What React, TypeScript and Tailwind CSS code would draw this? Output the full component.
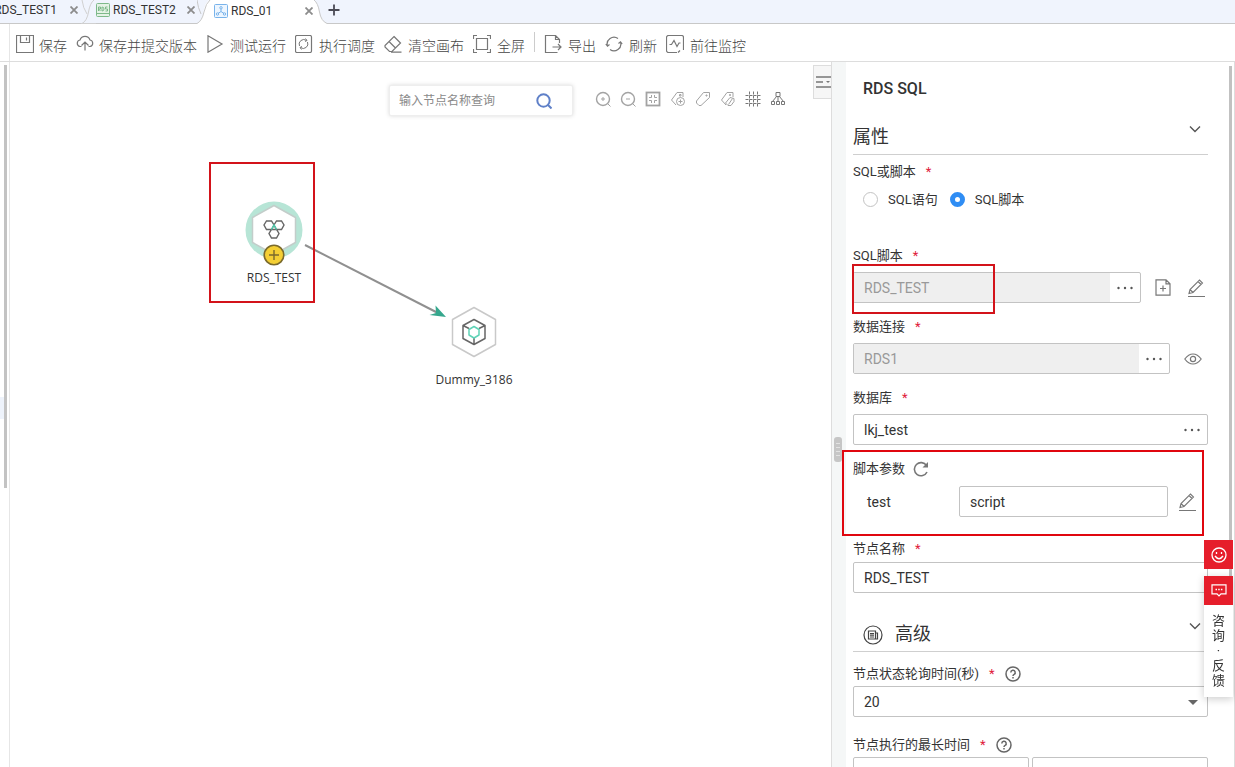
import { useState, type ReactNode } from 'react';

const ICONS: Record<string, ReactNode> = {
  save: <path d="M.5.5h17v17H.5zM4.5.5v7h9v-7M10.5 2.5v3" />,
  upload: <path d="M5.500 11.500H4A3.300 3.300 0 0 1 4 5 5.300 5.300 0 0 1 14 5a3.300 3.300 0 0 1 0 6.500h-1.500M9 15.500V7M5.500 10.500 9 7l3.500 3.500" />,
  play: <path d="M2 .8v16.400L16 9z" />,
  schedule: (
    <>
      <rect x=".5" y=".5" width="16" height="17" rx="1.500" />
      <path d="M4.500 11a4.600 4.600 0 0 1 7-5.500M12.500 7a4.600 4.600 0 0 1-7 5.500M10.500 3.500l1.500 2-2 1M6.500 14.500l-1.500-2 2-1" strokeWidth="1" />
    </>
  ),
  eraser: <path d="M10 1.500 16.500 8 8 16.500H5.500L1 12v-1.500zM5 6.500l6.500 6.500M7 17.200h10.500" />,
  fullscreen: <path d="M3.500 3.500h11v11h-11zM.5 4V.5H4M14 .5h3.500V4M17.500 14v3.500H14M4 17.500H.5V14" />,
  export: <path d="M13.500 17.500H1.500V.500h10l4 4V8M11.500.5v4h4M8.500 12h8.500M14 9l3 3-3 3" />,
  refresh: <path d="M2.500 11A6.800 6.800 0 0 1 13 3.500M15.500 7A6.800 6.800 0 0 1 5 14.500M.8 9l1.700 2.200L4.500 9.500M13.500 8.500l2-1.700L17.200 9" />,
  monitor: <path d="M11 17.500H2.500a2 2 0 0 1-2-2v-13a2 2 0 0 1 2-2h13a2 2 0 0 1 2 2V15M3.500 9.500h2l2.500-4 3 6 2-3.500h1.500M12 17.500l2-2" />,
};

const CANVAS_TOOLS: { label: string; dark?: boolean; art: ReactNode }[] = [
  {
    label: '放大',
    art: (
      <>
        <circle cx="8" cy="8" r="6.500" strokeWidth="1.400" />
        <path d="M12.500 12.500l3 3M8 6v4M6 8h4" />
      </>
    ),
  },
  {
    label: '缩小',
    art: (
      <>
        <circle cx="8" cy="8" r="6.500" strokeWidth="1.400" />
        <path d="M12.500 12.500l3 3M6 8h4" />
      </>
    ),
  },
  {
    label: '适应画布',
    art: (
      <>
        <rect x="1.500" y="1.500" width="13" height="13" strokeWidth="1.800" />
        <path d="M6.500 4v2.500H4M9.500 4v2.500H12M6.500 12V9.500H4M9.500 12V9.500H12" />
      </>
    ),
  },
  {
    label: '添加标签',
    art: (
      <>
        <path d="M6 14 1.500 9 7 1.500h6V6M9.500 3.500h1.500v1.500H9.500z" />
        <circle cx="10.500" cy="10.500" r="4" />
        <path d="M10.500 8.500v4M8.500 10.500h4" />
      </>
    ),
  },
  { label: '标签', art: <path d="M8.500 1.500h6v5L6 14.500H4L1.500 12v-2zM11 4h1v1h-1z" /> },
  {
    label: '复制标签',
    art: <path d="M6 14 1.500 9 7 1.500h6V6M9.500 3.500h1v1h-1zM10 6.500 5.500 12 8 14.500h3l3-4V7.500zM8.500 13.500l4-6" />,
  },
  {
    label: '网格',
    dark: true,
    art: <path d="M4.500.5v15M8.500.5v15M12.500.5v15M.5 4.500h15M.5 8.500h15M.5 12.500h15" strokeDasharray="3 1" />,
  },
  {
    label: '自动布局',
    dark: true,
    art: <path d="M6 1.500h4v4H6zM1.500 10.500h3v3h-3zM6.500 10.500h3v3h-3zM11.500 10.500h3v3h-3zM6.500 5.500l-4 5M8 5.500v5M9.500 5.500l4 5" />,
  },
];

function ToolButton({ icon, label, tight }: { icon: string; label: string; tight?: boolean }) {
  return (
    <button className={`flex items-center text-sm leading-5 font-light text-[#444] ${tight ? 'gap-[5px]' : 'gap-1.5'}`}>
      <svg className="-mt-1 size-[18px]" viewBox="0 0 18 18" fill="none" stroke="#777" strokeWidth="1.2">
        {ICONS[icon]}
      </svg>
      <span>{label}</span>
    </button>
  );
}

function CloseButton() {
  return (
    <button aria-label="关闭">
      <svg className="size-2" viewBox="0 0 8 8" stroke="#8c8c8c" strokeWidth="1.8">
        <path d="M.5.500l7 7M7.500.500l-7 7" />
      </svg>
    </button>
  );
}

function Label({ htmlFor, help, children }: { htmlFor?: string; help?: boolean; children: ReactNode }) {
  return (
    <div className="flex h-5 items-center gap-2.5 pt-px">
      <label htmlFor={htmlFor}>{children}</label>
      <span className="text-[#e0203a]">*</span>
      {help && (
        <svg className="size-4" viewBox="0 0 16 16" fill="none" stroke="#666" strokeWidth="1.5">
          <circle cx="8" cy="8" r="7" />
          <path d="M5.800 6.500a2.200 2.200 0 1 1 3.300 1.900Q8 9 8 10M8 11v1.500" />
        </svg>
      )}
    </div>
  );
}

function PickerField({ id, value, disabled }: { id: string; value: string; disabled?: boolean }) {
  return (
    <div className="flex h-[31px] min-w-0 flex-1 overflow-hidden rounded-[2px] border border-[#c3c3c3] bg-white">
      <input
        id={id}
        defaultValue={value}
        disabled={disabled}
        className="min-w-0 flex-1 px-2.5 text-sm disabled:bg-[#efefef] disabled:text-[#999]"
      />
      <button aria-label="选择" className="flex w-[30px] items-center justify-center">
        <svg className="h-1 w-4" viewBox="0 0 16 4" fill="#555">
          <circle cx="1.500" cy="2" r="1.200" />
          <circle cx="8" cy="2" r="1.200" />
          <circle cx="14.500" cy="2" r="1.200" />
        </svg>
      </button>
    </div>
  );
}

function EditIcon() {
  return (
    <svg className="size-[18px]" viewBox="0 0 18 18" fill="none" stroke="#777" strokeWidth="1.100">
      <path d="M1 17.500h17M2 14.500l1-4L12.500 1l3 3L6 13.500zM3 10.500l3 3M11 2.500l3 3" />
    </svg>
  );
}

function SectionHead({ title, icon }: { title: string; icon?: ReactNode }) {
  return (
    <div className="flex h-[37px] items-center border-b border-[#cfcfcf]">
      {icon}
      <h3 className="flex-1 pt-px text-lg">{title}</h3>
      <button aria-label="收起" className="mt-[5px] mr-[7px] self-start">
        <svg className="size-3" viewBox="0 0 12 12" fill="none" stroke="#555" strokeWidth="1.400">
          <path d="M1 3.500l5 5 5-5" />
        </svg>
      </button>
    </div>
  );
}

function GraphCanvas() {
  return (
    <main className="relative min-w-0 flex-1 overflow-hidden">
      <div className="flex items-start justify-end pt-[3px]">
        <div className="mt-5 flex h-[31px] w-[184px] items-center rounded-[2px] border border-[#eee] bg-white pr-5 pl-[9px] shadow-[0_0_4px_rgba(0,0,0,0.15)]">
          <input
            aria-label="输入节点名称查询"
            placeholder="输入节点名称查询"
            className="min-w-0 flex-1 text-xs placeholder:text-[#8a8a8a]"
          />
          <button aria-label="查询">
            <svg className="size-4" viewBox="0 0 16 16" fill="none" stroke="#5f80c8" strokeWidth="2">
              <circle cx="7.500" cy="7.500" r="6.200" />
              <path d="M12 12l3.500 3.500" />
            </svg>
          </button>
        </div>
        <div className="mt-[26px] ml-[22px] flex gap-[9px]">
          {CANVAS_TOOLS.map((tool) => (
            <button key={tool.label} aria-label={tool.label}>
              <svg className="size-4" viewBox="0 0 16 16" fill="none" stroke={tool.dark ? '#777' : '#a3a3a3'}>
                {tool.art}
              </svg>
            </button>
          ))}
        </div>
        <button
          aria-label="收起面板"
          className="ml-[27px] flex h-[34px] w-[18px] items-center justify-end border border-r-0 border-[#ddd] bg-[#f6f6f6]"
        >
          <svg className="h-3 w-[15px]" viewBox="0 0 15 12" stroke="#777" strokeWidth="1.600">
            <path d="M0 1h15M0 6h7M0 11h15" />
            <path d="M10 5h4l-2 2z" fill="#777" stroke="none" />
          </svg>
        </button>
      </div>

      {/* edge between nodes */}
      <svg className="pointer-events-none absolute top-0 left-0 h-[330px] w-[520px]" viewBox="0 0 520 330">
        <path d="M295 183 428 251" stroke="#909090" strokeWidth="2" />
        <path d="M436 255 425.500 243.500 426 251 419.500 253z" fill="#35a78d" />
      </svg>

      <div className="absolute top-[138px] left-[224px] flex w-20 flex-col items-center">
        <svg className="h-[68px] w-20" viewBox="0 0 80 68" fill="none">
          <circle cx="40" cy="30" r="28.500" fill="#b7e5d6" />
          <path d="M40 5.500 61.500 17.500v25L40 54.500 18.500 42.500v-25z" fill="#fff" stroke="#c3cdca" strokeWidth="1.500" strokeLinejoin="round" />
          <path d="M32.500 21h5l2.500 4-2.500 4.500h-5L30 25zM42.500 21h5l2.500 4-2.500 4.500h-5L40 25zM37.500 29.500h5l2.500 4-2.500 4.500h-5L35 33.500z" stroke="#666" strokeWidth="1.400" />
          <path d="M37.500 29.500 40 25l2.500 4.500" stroke="#4fceae" strokeWidth="1.400" />
          <circle cx="40" cy="55" r="9.800" fill="#f4cf34" stroke="#7a6a2c" strokeWidth="1.600" />
          <path d="M40 50v10M35 55h10" stroke="#7a6a2c" strokeWidth="1.400" />
        </svg>
        <span className="font-['Open_Sans','Noto_Sans',sans-serif] text-xs leading-5 text-[#333]">RDS_TEST</span>
      </div>

      <div className="absolute top-[240px] left-[424px] flex w-20 flex-col items-center">
        <svg className="h-[68px] w-20" viewBox="0 0 80 68" fill="none" strokeLinejoin="round">
          <path d="M40 5.500 61.500 17.500v25L40 54.500 18.500 42.500v-25z" fill="#fff" stroke="#c9c9c9" strokeWidth="1.500" />
          <path d="M40 17.500 51 23.500v13L40 42.500 29 36.500v-13zM29 23.500l6 3M51 23.500l-6 3M40 35v7" stroke="#666" strokeWidth="1.500" />
          <path d="M40 24.500 45 27.500v5.500l-5 3-5-3v-5.500z" stroke="#5fd3b7" strokeWidth="1.500" />
        </svg>
        <span className="font-['Open_Sans','Noto_Sans',sans-serif] text-xs leading-5 text-[#333]">Dummy_3186</span>
      </div>

      <div className="pointer-events-none absolute top-[100px] left-[199px] h-[141px] w-[106px] border-2 border-[#d3131a]" />
    </main>
  );
}

function PropertyPanel() {
  const [mode, setMode] = useState('script');
  const radioClass =
    'size-[15px] appearance-none rounded-full border border-[#c3c3c3] bg-white checked:border-5 checked:border-[#2f8df4]';

  return (
    <aside className="flex w-[404px] shrink-0 overflow-hidden border-x border-[#ddd] text-[13px] text-[#333]">
      <div className="w-3.5 shrink-0 bg-[#f5f7f7] pt-[375px] pl-0.5">
        <div className="flex h-[25px] w-2 items-center justify-center rounded-[3px] bg-[#c6c6c6]">
          <svg className="h-4 w-1" viewBox="0 0 4 16" stroke="#fff">
            <path d="M1 1v14M3 1v14" strokeDasharray="1 3" />
          </svg>
        </div>
      </div>

      <div className="min-w-0 flex-1 pr-[21px] pl-[7px]">
        <h2 className="mb-1 flex h-[52px] items-center pt-px pl-2.5 text-base font-medium">RDS SQL</h2>
        <SectionHead title="属性" />

        <div role="radiogroup" aria-label="SQL或脚本" className="mt-1.5 mb-[35px]">
          <Label>SQL或脚本</Label>
          <div className="mt-[7px] flex h-[22px] items-center gap-3 pt-px pl-2.5">
            <label className="flex items-center gap-2.5">
              <input type="radio" name="mode" className={radioClass} checked={mode === 'sql'} onChange={() => setMode('sql')} />
              SQL语句
            </label>
            <label className="flex items-center gap-2.5">
              <input type="radio" name="mode" className={radioClass} checked={mode === 'script'} onChange={() => setMode('script')} />
              SQL脚本
            </label>
          </div>
        </div>

        <div className="space-y-[13px]">
          <div className="space-y-[7px]">
            <Label htmlFor="script">SQL脚本</Label>
            <div className="relative flex items-center">
              <PickerField id="script" value="RDS_TEST" disabled />
              <button aria-label="新建脚本" className="ml-3.5">
                <svg className="h-[17px] w-4" viewBox="0 0 16 17" fill="none" stroke="#777" strokeWidth="1.200">
                  <path d="M1 .8h10l4 4v11.400H1zM11 .8v4h4M8 6.500v6M5 9.500h6" />
                </svg>
              </button>
              <button aria-label="编辑脚本" className="mr-[3px] ml-4">
                <EditIcon />
              </button>
              <div className="pointer-events-none absolute -top-2 -left-px h-[50px] w-[143px] border-2 border-[#d3131a]" />
            </div>
          </div>

          <div className="space-y-[7px]">
            <Label htmlFor="conn">数据连接</Label>
            <div className="flex items-center">
              <PickerField id="conn" value="RDS1" disabled />
              <button aria-label="查看" className="mr-1.5 ml-3.5">
                <svg className="h-3 w-[18px]" viewBox="0 0 18 12" fill="none" stroke="#777" strokeWidth="1.200">
                  <path d="M.8 6Q4.500 1 9 1t8.200 5Q13.500 11 9 11T.8 6z" />
                  <circle cx="9" cy="6" r="2.600" />
                </svg>
              </button>
            </div>
          </div>

          <div className="space-y-[7px]">
            <Label htmlFor="db">数据库</Label>
            <div className="flex">
              <PickerField id="db" value="lkj_test" />
            </div>
          </div>

          <div className="relative">
            <div className="flex h-5 items-center gap-2 pt-px">
              <label htmlFor="param">脚本参数</label>
              <button aria-label="刷新参数">
                <svg className="size-4" viewBox="0 0 16 16" fill="none" stroke="#777" strokeWidth="1.600">
                  <path d="M14 11A6.600 6.600 0 1 1 13.500 4.500" />
                  <path d="M15 1v5.500H9.500z" fill="#777" stroke="none" />
                </svg>
              </button>
            </div>
            <div className="mt-2 flex items-center pl-3.5">
              <label htmlFor="param" className="w-[92px] text-sm">test</label>
              <input
                id="param"
                defaultValue="script"
                className="h-[31px] min-w-0 flex-1 rounded-[2px] border border-[#c3c3c3] px-2.5 text-sm"
              />
              <button aria-label="编辑参数" className="mr-3 ml-2.5">
                <EditIcon />
              </button>
            </div>
            <div className="pointer-events-none absolute -top-2 right-1 -left-[11px] h-[86px] border-2 border-[#e0070f]" />
          </div>
        </div>

        <div className="mt-[21px] space-y-1">
          <Label htmlFor="node">节点名称</Label>
          <input
            id="node"
            defaultValue="RDS_TEST"
            className="block h-[31px] w-full rounded-[2px] border border-[#c3c3c3] px-2.5 text-sm"
          />
        </div>

        <div className="mt-[22px]">
          <SectionHead
            title="高级"
            icon={
              <svg className="mt-1 mr-3 ml-2.5 size-5" viewBox="0 0 20 20" fill="none" stroke="#444" strokeWidth="1.200">
                <circle cx="10" cy="10" r="9" />
                <path d="M5.500 6h7v8h-7zM12.500 8h2v6h-2M7 8.500h4M7 10.200h4M7 12h4" />
              </svg>
            }
          />
        </div>

        <div className="mt-[11px] space-y-[3px]">
          <Label htmlFor="poll" help>节点状态轮询时间(秒)</Label>
          <div className="relative">
            <select
              id="poll"
              className="block h-[31px] w-full appearance-none rounded-[2px] border border-[#c3c3c3] px-2.5 text-sm"
            >
              <option>20</option>
            </select>
            <svg className="pointer-events-none absolute top-3.5 right-2.5 h-[5px] w-2.5" viewBox="0 0 10 5">
              <path d="M0 0h10L5 5z" fill="#666" />
            </svg>
          </div>
        </div>

        <div className="mt-[17px] space-y-[3px]">
          <Label htmlFor="max" help>节点执行的最长时间</Label>
          <div className="flex gap-[3px]">
            <input id="max" className="h-[31px] min-w-0 flex-1 rounded-[2px] border border-[#c3c3c3] px-2.5 text-sm" />
            <input aria-label="时间单位" className="h-[31px] min-w-0 flex-1 rounded-[2px] border border-[#c3c3c3] px-2.5 text-sm" />
          </div>
        </div>
      </div>

      {/* scroll thumb */}
      <div className="mt-1 mr-0.5 h-[511px] w-[3px] shrink-0 bg-[#c1c1c1]" />
    </aside>
  );
}

function FeedbackDock() {
  return (
    <div className="fixed top-[540px] right-0.5 w-[29px]">
      <button aria-label="满意度" className="mb-[7px] flex size-[29px] items-center justify-center bg-[#e61e2b]">
        <svg className="size-4" viewBox="0 0 16 16" fill="none" stroke="#fff" strokeWidth="1.300">
          <circle cx="8" cy="8" r="7" />
          <path d="M5.500 5v2M10.500 5v2M4 9q4 5.500 8 0" />
        </svg>
      </button>
      <div className="bg-white shadow-[0_2px_8px_rgba(0,0,0,0.2)]">
        <button aria-label="咨询" className="flex size-[29px] items-center justify-center bg-[#e61e2b]">
          <svg className="h-[13px] w-4" viewBox="0 0 16 13" fill="none" stroke="#fff" strokeWidth="1.200">
            <path d="M1 .8h14v9h-5l-2 2-2-2H1z" />
            <path d="M4.500 5.500h7" strokeWidth="1.500" strokeDasharray="1.500 1.200" />
          </svg>
        </button>
        <a href="#" className="flex flex-col items-center pt-2 pb-[9px] text-[13px] leading-[15px] text-[#333]">
          <span>咨</span>
          <span>询</span>
          <span>·</span>
          <span>反</span>
          <span>馈</span>
        </a>
      </div>
    </div>
  );
}

export default function App() {
  return (
    <div className="flex h-screen flex-col overflow-hidden bg-white font-['Roboto','Noto_Sans_CJK_SC',sans-serif]">
      <nav className="flex h-6 shrink-0 bg-[#f0f4fd] text-xs text-[#333]">
        <div className="flex w-[81px] shrink-0 items-center justify-end gap-[13px] border-b border-[#c8c8c8] pr-[3px] pb-[3px]">
          <a href="#" className="shrink-0">RDS_TEST1</a>
          <CloseButton />
        </div>
        <svg className="h-6 w-[15px]" viewBox="0 0 15 24" fill="none" stroke="#d0d0d0">
          <path d="M0 23.500h15M1 0q1 8 5 14M13 0Q9 3 7.500 12 6 21 1 23.500" />
        </svg>
        <div className="flex items-center border-b border-[#c8c8c8] pb-[3px]">
          <svg className="mr-[3px] size-3.5" viewBox="0 0 14 14" fill="none" stroke="#7db98a">
            <rect x=".5" y=".5" width="13" height="13" rx="1" fill="#e4f2e6" />
            <path d="M2.500 8V4h2v2h-2l2 2M6 4v4q2 0 2-2t-2-2M11.500 4h-2v2h2v2h-2M.5 10.500h13" />
          </svg>
          <a href="#" className="w-[62px]">RDS_TEST2</a>
          <span className="ml-3 flex pr-1.5">
            <CloseButton />
          </span>
        </div>
        <svg className="-ml-1 h-6 w-[15px] shrink-0" viewBox="0 0 15 24" fill="none" stroke="#c8c8c8">
          <path d="M15 0h-3Q8 3 6.500 12 5 21 0 23.500V24h15z" fill="#fff" stroke="none" />
          <path d="M0 0q1 8 4 14M13 0Q9 3 7 12 5 21 0 23.500" />
        </svg>
        <div className="flex items-center bg-white pb-[3px]">
          <svg className="mr-[3px] ml-0.5 size-3.5" viewBox="0 0 14 14" fill="none" stroke="#79b3ea">
            <rect x=".5" y=".5" width="13" height="13" rx="1" fill="#edf6ff" />
            <path d="M7 5v2.500M4 9.500l3-2 3 2" />
            <circle cx="7" cy="3.800" r="1.200" />
            <circle cx="3.500" cy="10" r="1.200" />
            <circle cx="10.500" cy="10" r="1.200" />
          </svg>
          <a href="#" aria-current="page" className="w-[42px]">RDS_01</a>
          <span className="ml-8 flex">
            <CloseButton />
          </span>
        </div>
        <svg className="h-6 w-3.5 shrink-0" viewBox="0 0 14 24" fill="none" stroke="#c8c8c8">
          <path d="M0 0h1Q5 3 6.500 12 8 21 14 23.500V24H0z" fill="#fff" stroke="none" />
          <path d="M1 0Q5 3 6.500 12 8 21 14 23.500" />
        </svg>
        <div className="flex flex-1 items-center border-b border-[#c8c8c8] pb-[3px] pl-px">
          <button aria-label="新建">
            <svg className="size-3" viewBox="0 0 12 12" stroke="#4a4a55" strokeWidth="1.800">
              <path d="M6 .5v11M.5 6h11" />
            </svg>
          </button>
        </div>
      </nav>

      <div className="flex h-[38px] shrink-0 border-b border-[#ddd]">
        <div className="w-2.5 shrink-0 border-r border-[#e6e6e6]" />
        <div className="flex items-center gap-[9px] pt-[7px] pl-1.5 whitespace-nowrap">
          <ToolButton icon="save" label="保存" tight />
          <ToolButton icon="upload" label="保存并提交版本" tight />
          <div className="flex items-center gap-[9px]">
            <ToolButton icon="play" label="测试运行" />
            <ToolButton icon="schedule" label="执行调度" />
            <ToolButton icon="eraser" label="清空画布" />
            <ToolButton icon="fullscreen" label="全屏" />
            <span className="-mt-2 h-5 w-px bg-[#ccc]" />
            <ToolButton icon="export" label="导出" />
            <ToolButton icon="refresh" label="刷新" />
            <ToolButton icon="monitor" label="前往监控" />
          </div>
        </div>
      </div>

      <div className="flex min-h-0 flex-1">
        <div className="flex w-2.5 shrink-0 items-start border-r border-[#e6e6e6]">
          <div className="mt-[335px] h-[22px] w-1 bg-[#eef3fb]" />
          <div className="mt-[3px] h-[423px] w-[3px] bg-[#c3c3c3]" />
        </div>
        <GraphCanvas />
        <PropertyPanel />
      </div>

      <FeedbackDock />
    </div>
  );
}
